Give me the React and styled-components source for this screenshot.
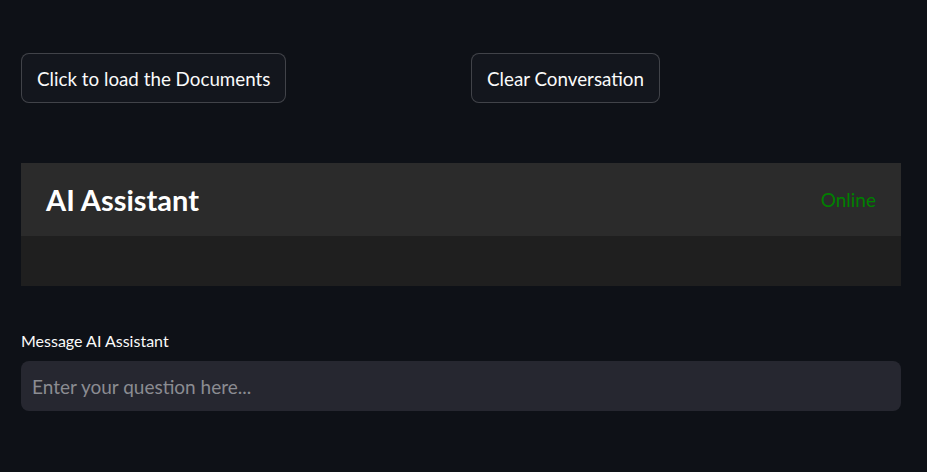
import styled, { createGlobalStyle } from "styled-components";

const Global = createGlobalStyle`
  html, body {
    margin: 0;
    padding: 0;
    background: #0e1117;
    font-family: Lato, "Noto Sans", sans-serif;
  }
`;

function App() {
  return (
    <Page>
      <Global />
      <ButtonRow>
        <div>
          <Button>Click to load the Documents</Button>
        </div>
        <div>
          <Button>Clear Conversation</Button>
        </div>
      </ButtonRow>
      <Chat>
        <ChatHeader>
          <Title>AI Assistant</Title>
          <Status>Online</Status>
        </ChatHeader>
        <ChatBody />
      </Chat>
      <Field>
        <Label>Message AI Assistant</Label>
        <Input placeholder="Enter your question here..." />
      </Field>
    </Page>
  );
}
export default App;

const Page = styled.div`
  width: 927px;
  height: 472px;
  box-sizing: border-box;
  padding: 53px 26px 0 21px;
  display: flex;
  flex-direction: column;
`;
const ButtonRow = styled.div`
  display: grid;
  grid-template-columns: 1fr 1fr;
  gap: 20px;
`;
const Button = styled.button`
  height: 50px;
  padding: 0 15px;
  border-radius: 8px;
  border: 1px solid rgba(250, 250, 250, 0.2);
  background: #13161d;
  color: #fafafa;
  font-family: Lato, "Noto Sans", sans-serif;
  font-size: 18.8px;
`;
const Chat = styled.div`
  margin-top: 60px;
  display: flex;
  flex-direction: column;
`;
const ChatHeader = styled.div`
  height: 73px;
  background: #2b2b2b;
  display: flex;
  align-items: center;
  justify-content: space-between;
  padding: 0 25px;
`;
const Title = styled.h2`
  margin: 0;
  color: #fff;
  font-size: 29px;
  font-weight: 700;
`;
const Status = styled.span`
  color: #008000;
  font-size: 19px;
`;
const ChatBody = styled.div`
  height: 50px;
  background: #1f1f1f;
`;
const Field = styled.div`
  margin-top: 44px;
  display: flex;
  flex-direction: column;
`;
const Label = styled.label`
  color: #fafafa;
  font-size: 16px;
  height: 22px;
  line-height: 22px;
  margin-bottom: 9px;
`;
const Input = styled.input`
  height: 50px;
  box-sizing: border-box;
  border: none;
  outline: none;
  border-radius: 8px;
  background: #262730;
  color: #fafafa;
  padding: 0 11px;
  font-family: Lato, "Noto Sans", sans-serif;
  font-size: 19px;
  &::placeholder {
    color: #8b8c92;
  }
`;
